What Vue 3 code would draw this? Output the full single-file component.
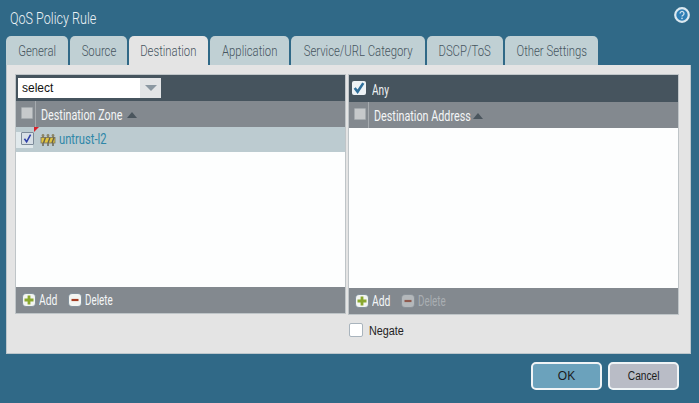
<script setup>
const tabs = [
  { label: 'General', w: 62 },
  { label: 'Source', w: 57 },
  { label: 'Destination', w: 79, active: true },
  { label: 'Application', w: 79 },
  { label: 'Service/URL Category', w: 134 },
  { label: 'DSCP/ToS', w: 76 },
  { label: 'Other Settings', w: 93 },
]
</script>

<template>
  <div class="dialog">
    <header class="title-bar">
      <span class="title"><span class="squeeze">QoS Policy Rule</span></span>
      <svg class="help" width="16" height="16" viewBox="0 0 16 16">
        <circle cx="8" cy="8" r="6.8" fill="#2f7fb5" stroke="#dce9f0" stroke-width="2.2" />
        <path d="M6 6.4a2 2 0 1 1 3 1.8c-.7.4-1 .7-1 1.4" fill="none" stroke="#cfe2ee" stroke-width="1.3" />
        <circle cx="8" cy="11.4" r=".8" fill="#cfe2ee" />
      </svg>
    </header>

    <nav class="tabs">
      <div
        v-for="t in tabs"
        :key="t.label"
        class="tab"
        :class="{ active: t.active }"
        :style="{ width: t.w + 'px' }"
      >
        <span class="squeeze">{{ t.label }}</span>
      </div>
    </nav>

    <main class="panel">
      <div class="columns">
        <section class="col">
          <div class="table">
            <div class="bar">
              <div class="combo">
                <span class="combo-text">select</span>
                <span class="combo-btn"><i class="combo-arrow"></i></span>
              </div>
            </div>
            <div class="head">
              <span class="chk-cell"><i class="box grey"></i></span>
              <span class="head-label"><span class="squeeze-h">Destination Zone</span><i class="sort zone-sort"></i></span>
            </div>
            <div class="row">
              <span class="chk-cell light">
                <i class="box checked-small">
                  <svg width="11" height="11" viewBox="0 0 10 10"><path d="M2.2 5.2 4.2 8 7.8 1.4" fill="none" stroke="#2e3fa8" stroke-width="1.4" /></svg>
                </i>
              </span>
              <i class="flag"></i>
              <svg class="zone" width="16" height="14" viewBox="0 0 16 14">
                <path d="M3 2.5v10.5M8 2.5v10.5M13 2.5v10.5" stroke="#6a6554" stroke-width="1.5" />
                <rect x="1" y="4.5" width="14" height="5.5" fill="#e0c440" stroke="#77725c" stroke-width=".8" />
                <path d="M3.5 10l2-5.5M8 10l2-5.5M12 10l2-5.5" stroke="#66614f" stroke-width="1.4" />
                <circle cx="3" cy="2.4" r="1.4" fill="#8d8668" /><circle cx="8" cy="2.4" r="1.4" fill="#8d8668" /><circle cx="13" cy="2.4" r="1.4" fill="#8d8668" />
              </svg>
              <span class="zone-name"><span class="squeeze">untrust-l2</span></span>
            </div>
            <div class="body"></div>
            <div class="foot">
              <span class="action">
                <svg class="act-icon" width="14" height="14" viewBox="0 0 14 14">
                  <rect x=".5" y=".5" width="13" height="13" rx="3.5" fill="#f3f5f2" stroke="#5f7484" stroke-width=".6" />
                  <path d="M7 2.5v9M2.5 7h9" stroke="#8aa82f" stroke-width="2.8" />
                </svg>
                <span class="squeeze-a">Add</span>
              </span>
              <span class="action">
                <svg class="act-icon" width="14" height="14" viewBox="0 0 14 14">
                  <rect x=".5" y=".5" width="13" height="13" rx="3.5" fill="#f3f5f2" stroke="#5f7484" stroke-width=".6" />
                  <path d="M3.5 7h7" stroke="#a33d23" stroke-width="2.2" />
                </svg>
                <span class="squeeze-a del">Delete</span>
              </span>
            </div>
          </div>
        </section>

        <section class="col">
          <div class="table tall">
            <div class="bar any">
              <i class="box any-box">
                <svg width="14" height="14" viewBox="0 0 13 13"><path d="M2.5 6.5 5.2 10 10.5 2" fill="none" stroke="#2f6f9a" stroke-width="2.4" /></svg>
              </i>
              <span class="any-label"><span class="squeeze-a">Any</span></span>
            </div>
            <div class="head">
              <span class="chk-cell"><i class="box grey"></i></span>
              <span class="head-label"><span class="squeeze-h">Destination Address</span><i class="sort addr-sort"></i></span>
            </div>
            <div class="body"></div>
            <div class="foot">
              <span class="action">
                <svg class="act-icon" width="14" height="14" viewBox="0 0 14 14">
                  <rect x=".5" y=".5" width="13" height="13" rx="3.5" fill="#f3f5f2" stroke="#5f7484" stroke-width=".6" />
                  <path d="M7 2.5v9M2.5 7h9" stroke="#8aa82f" stroke-width="2.8" />
                </svg>
                <span class="squeeze-a">Add</span>
              </span>
              <span class="action disabled">
                <svg class="act-icon" width="14" height="14" viewBox="0 0 14 14">
                  <rect x=".5" y=".5" width="13" height="13" rx="3.5" fill="#b4b8bb" stroke="#7d878f" stroke-width=".6" />
                  <path d="M3.5 7h7" stroke="#8f5a4e" stroke-width="2.2" />
                </svg>
                <span class="squeeze-a del">Delete</span>
              </span>
            </div>
          </div>
          <label class="negate">
            <i class="neg-box"></i>
            <span class="neg-text">Negate</span>
          </label>
        </section>
      </div>
    </main>

    <footer class="buttons">
      <div class="btn ok">OK</div>
      <div class="btn cancel"><span class="cancel-text">Cancel</span></div>
    </footer>
  </div>
</template>

<style scoped>
.dialog {
  width: 699px;
  height: 403px;
  background: #306987;
  font-family: "Roboto", "Liberation Sans", sans-serif;
  box-sizing: border-box;
  padding: 0 8px 0 6px;
  display: flex;
  flex-direction: column;
  overflow: hidden;
}
.squeeze, .squeeze-h, .squeeze-a {
  display: inline-block;
  white-space: nowrap;
}
.squeeze { transform: scaleX(0.755); }
.squeeze-h { transform: scaleX(0.77); transform-origin: left center; }
.squeeze-a { transform: scaleX(0.74); transform-origin: left center; }
.squeeze-a.del { transform: scaleX(0.7); }
.title-bar {
  height: 36px;
  display: flex;
  align-items: flex-start;
  justify-content: space-between;
  color: #eef3f6;
  flex: none;
}
.title {
  font-size: 17px;
  font-weight: 300;
  line-height: 18px;
  margin: 9px 0 0 4px;
  display: inline-block;
  width: 86px;
}
.title .squeeze { transform: scaleX(0.74); transform-origin: left center; }
.help { margin: 7px 1px 0 0; }
.tabs {
  height: 29px;
  display: flex;
  gap: 2px;
  flex: none;
}
.tab {
  box-sizing: border-box;
  background: #c0d0d4;
  border-radius: 5px 5px 0 0;
  color: #46555f;
  font-size: 15px;
  font-weight: 300;
  line-height: 31px;
  height: 29px;
  white-space: nowrap;
  display: flex;
  justify-content: center;
}
.tab.active {
  background: #e4e4e4;
}
.panel {
  width: 685px;
  height: 289px;
  flex: none;
  box-sizing: border-box;
  background: #e4e4e4;
  border: 1px solid #bcc6cb;
  border-top: 0;
  padding: 9px 12px 0 8px;
}
.columns {
  display: flex;
  gap: 2px;
}
.col {
  width: 331px;
  flex: none;
}
.table {
  height: 240px;
  box-sizing: border-box;
  border: 1px solid #bfc5c8;
  display: flex;
  flex-direction: column;
  background: #fff;
}
.table.tall { height: 241px; }
.bar {
  height: 26px;
  background: #46545e;
  flex: none;
  display: flex;
  align-items: center;
  padding-left: 2px;
}
.combo {
  display: flex;
  width: 143px;
  height: 20px;
}
.combo-text {
  width: 122px;
  background: #fff;
  font-family: "Liberation Sans", sans-serif;
  font-size: 12px;
  line-height: 21px;
  padding-left: 4px;
  box-sizing: border-box;
  color: #111;
}
.combo-btn {
  width: 21px;
  background: #e2e4e6;
  display: flex;
  align-items: center;
  justify-content: center;
}
.combo-arrow {
  width: 0;
  height: 0;
  border-left: 6px solid transparent;
  border-right: 6px solid transparent;
  border-top: 6px solid #8b98a2;
}
.head {
  height: 26px;
  background: #83898f;
  display: flex;
  flex: none;
  color: #f4f6f7;
  font-size: 14px;
  align-items: stretch;
}
.chk-cell {
  width: 19px;
  flex: none;
  display: flex;
  align-items: center;
  justify-content: center;
  border-right: 1px solid #a5aaae;
  box-sizing: content-box;
}
.chk-cell.light {
  width: 17px;
  background: #e1e9ec;
  border: 0;
}
.box {
  display: block;
  width: 12px;
  height: 12px;
  box-sizing: border-box;
  border-radius: 1px;
}
.box.grey {
  background: #c6c9cb;
  border: 1px solid #a5abaf;
  margin-left: 2px;
  margin-bottom: 2px;
}
.box.checked-small {
  width: 13px;
  height: 13px;
  background: #d7dfe6;
  border: 1px solid #7c8a99;
  display: flex;
  align-items: center;
  justify-content: center;
  margin-left: 5px;
  margin-bottom: 3px;
}
.head-label {
  display: flex;
  align-items: center;
  padding-left: 5px;
  padding-top: 2px;
}
.sort {
  width: 0;
  height: 0;
  border-left: 5px solid transparent;
  border-right: 5px solid transparent;
  border-bottom: 6px solid #4a555d;
  margin-top: -1px;
}
.zone-sort { margin-left: -20px; }
.addr-sort { margin-left: -27px; }
.row {
  height: 25px;
  flex: none;
  background: #bccbd0;
  display: flex;
  align-items: center;
  position: relative;
}
.flag {
  position: absolute;
  left: 18px;
  top: 0;
  width: 0;
  height: 0;
  border-top: 5px solid #d6202a;
  border-right: 5px solid transparent;
}
.zone {
  margin-left: 7px;
  flex: none;
}
.zone-name {
  color: #2f87a8;
  font-size: 14px;
  margin: -2px 0 0 3px;
}
.zone-name .squeeze { transform: scaleX(0.8); transform-origin: left center; }
.body {
  flex: 1;
  background: #fdfefe;
}
.foot {
  height: 26px;
  background: #83898f;
  flex: none;
  display: flex;
  align-items: center;
  gap: 11px;
  padding-left: 6px;
  color: #f4f6f7;
  font-size: 14px;
}
.action {
  display: flex;
  align-items: center;
  gap: 3px;
  width: 35px;
}
.action.disabled { color: #a9aeb2; }
.act-icon { flex: none; }
.any {
  height: 27px;
  gap: 6px;
  padding-left: 3px;
}
.box.any-box {
  width: 14px;
  height: 14px;
  background: #eef2f5;
  border-radius: 2px;
  display: flex;
  align-items: center;
  justify-content: center;
  margin-bottom: 2px;
}
.any-label {
  color: #f0f3f5;
  font-size: 14px;
  margin-top: 2px;
}
.any-label .squeeze-a { transform: scaleX(0.72); }
.negate {
  display: flex;
  align-items: center;
  gap: 6px;
  margin: 7px 0 0 1px;
  font-size: 12px;
  color: #222;
  font-family: "Liberation Sans", sans-serif;
}
.neg-text {
  display: inline-block;
  transform: scaleX(0.9);
  transform-origin: left center;
  margin-top: 2px;
}
.neg-box {
  width: 14px;
  height: 14px;
  box-sizing: border-box;
  background: #fff;
  border: 1px solid #a9b4bd;
  border-radius: 2px;
  display: block;
}
.buttons {
  display: flex;
  justify-content: flex-end;
  gap: 6px;
  padding: 8px 12px 0 0;
  width: 685px;
  box-sizing: border-box;
}
.btn {
  width: 71px;
  height: 28px;
  box-sizing: border-box;
  border: 2px solid #f0f4f6;
  border-radius: 5px;
  font-family: "Liberation Sans", sans-serif;
  font-size: 12px;
  line-height: 24px;
  text-align: center;
  color: #1c1c1c;
}
.cancel-text { display: inline-block; transform: scaleX(0.85); }
.ok { background: #6ba2bc; }
.cancel { background: #b9bcc6; }
</style>

<style>
body { margin: 0; }
</style>
